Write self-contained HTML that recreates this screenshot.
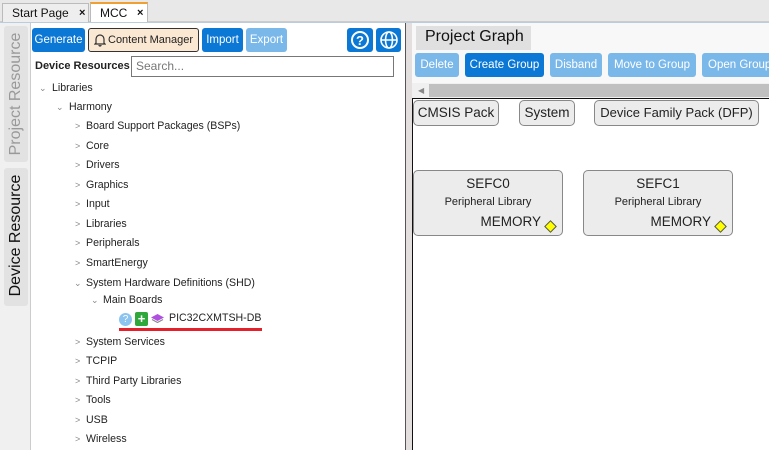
<!DOCTYPE html>
<html><head><style>
*{box-sizing:border-box;margin:0;padding:0}
body{width:769px;height:450px;overflow:hidden;background:#f0f0f0;font-family:"Liberation Sans",sans-serif;position:relative;font-size:12px;color:#111}
.a{position:absolute;white-space:nowrap}
.tab{position:absolute;top:3px;height:19px;border:1px solid #bbb;border-bottom:none;font-size:12px;padding:2px 0 0 9px}
.btn{position:absolute;height:24px;border-radius:3px;color:#fff;font-size:11.5px;text-align:center;line-height:24px;white-space:nowrap;overflow:hidden}
.tr{position:absolute;font-size:10.6px;color:#222;white-space:nowrap}
.ch{position:absolute;font-size:9px;color:#888}
.node{position:absolute;background:#ececec;border:1px solid #888;border-radius:5px;font-size:13.5px;color:#222;text-align:center;white-space:nowrap}
</style></head><body>
<div class="a" style="left:0;top:0;width:769px;height:22px;background:#e8e8e8;border-bottom:1px solid #ccc"></div>
<div class="tab" style="left:2px;width:87px;background:#eee">Start Page<span class="a" style="left:76px;top:3px;font-size:11px;font-weight:bold">×</span></div>
<div class="tab" style="left:90px;width:58px;top:2px;height:21px;background:#fff;border-top:2px solid #f0a030">MCC<span class="a" style="left:46px;top:3px;font-size:11px;font-weight:bold">×</span></div>
<div class="a" style="left:0;top:22px;width:769px;height:428px;background:#fff;border-top:1px solid #bcd"></div>
<div class="a" style="left:0;top:23px;width:31px;height:427px;background:#f0f0f0;border-right:1px solid #ccc"></div>
<div class="a" style="left:4px;top:26px;width:24px;height:136px;background:#e2e2e2;border-radius:3px"></div>
<div class="a" style="left:4px;top:168px;width:24px;height:138px;background:#e2e2e2;border-radius:3px"></div>
<div class="a" style="left:4px;top:162px;width:136px;height:24px;transform:rotate(-90deg);transform-origin:0 0;font-size:16px;color:#999;text-align:center;line-height:24px">Project Resource</div>
<div class="a" style="left:4px;top:303px;width:135px;height:24px;transform:rotate(-90deg);transform-origin:0 0;font-size:16px;color:#111;text-align:center;line-height:24px">Device Resource</div>
<div class="btn" style="left:32px;top:28px;width:53px;background:#0b78d6">Generate</div>
<div class="btn" style="left:88px;top:28px;width:111px;background:#fbe8d2;border:1px solid #333;color:#222;line-height:22px;text-align:left;padding-left:19px;font-size:11px"><svg class="a" style="left:5px;top:4px" width="12" height="14" viewBox="0 0 12 14"><path d="M2 10V6a4 4 0 0 1 8 0v4l1 1H1zM5 12a1 1 0 0 0 2 0" fill="none" stroke="#333" stroke-width="1.2"/></svg>Content Manager</div>
<div class="btn" style="left:202px;top:28px;width:41px;background:#0b78d6">Import</div>
<div class="btn" style="left:246px;top:28px;width:41px;background:#7ab8ea">Export</div>
<div class="btn" style="left:347px;top:28px;width:26px;background:#0b78d6"><svg width="20" height="20" style="margin-top:2px" viewBox="0 0 20 20"><circle cx="10" cy="10" r="8" fill="none" stroke="#fff" stroke-width="2"/><text x="10" y="15" font-size="13" font-weight="bold" fill="#fff" text-anchor="middle" font-family="Liberation Sans">?</text></svg></div>
<div class="btn" style="left:376px;top:28px;width:25px;background:#0b78d6"><svg width="20" height="20" style="margin-top:2px" viewBox="0 0 20 20" fill="none" stroke="#fff" stroke-width="1.6"><circle cx="10" cy="10" r="8"/><ellipse cx="10" cy="10" rx="3.5" ry="8"/><path d="M2 10h16"/></svg></div>
<div class="a" style="left:35px;top:60px;font-size:11px;font-weight:bold;color:#222">Device Resources</div>
<div class="a" style="left:131px;top:56px;width:263px;height:21px;border:1px solid #777;font-size:12px;color:#777;padding:2px 4px;background:#fff">Search...</div>
<div class="ch" style="left:39px;top:83px">&#8964;</div><div class="tr" style="left:52px;top:82px">Libraries</div>
<div class="ch" style="left:56px;top:102px">&#8964;</div><div class="tr" style="left:69px;top:101px">Harmony</div>
<div class="ch" style="left:75px;top:121px">&gt;</div><div class="tr" style="left:86px;top:120px">Board Support Packages (BSPs)</div>
<div class="ch" style="left:75px;top:141px">&gt;</div><div class="tr" style="left:86px;top:140px">Core</div>
<div class="ch" style="left:75px;top:160px">&gt;</div><div class="tr" style="left:86px;top:159px">Drivers</div>
<div class="ch" style="left:75px;top:180px">&gt;</div><div class="tr" style="left:86px;top:179px">Graphics</div>
<div class="ch" style="left:75px;top:199px">&gt;</div><div class="tr" style="left:86px;top:198px">Input</div>
<div class="ch" style="left:75px;top:219px">&gt;</div><div class="tr" style="left:86px;top:218px">Libraries</div>
<div class="ch" style="left:75px;top:238px">&gt;</div><div class="tr" style="left:86px;top:237px">Peripherals</div>
<div class="ch" style="left:75px;top:258px">&gt;</div><div class="tr" style="left:86px;top:257px">SmartEnergy</div>
<div class="ch" style="left:74px;top:278px">&#8964;</div><div class="tr" style="left:86px;top:277px">System Hardware Definitions (SHD)</div>
<div class="ch" style="left:91px;top:295px">&#8964;</div><div class="tr" style="left:103px;top:294px">Main Boards</div>
<div class="a" style="left:119px;top:313px;width:13px;height:13px;border-radius:50%;background:#8cc4f0;color:#fff;font-size:10px;text-align:center;line-height:13px">?</div>
<div class="a" style="left:135px;top:312px;width:13px;height:14px;border-radius:2px;background:#2ea83a;color:#fff;font-size:13px;font-weight:bold;text-align:center;line-height:14px">+</div>
<svg class="a" style="left:151px;top:314px" width="13" height="10" viewBox="0 0 13 10"><path d="M6.5 0L13 3.5 6.5 7 0 3.5z" fill="#b050e0"/><path d="M1 5.5l5.5 3 5.5-3" fill="none" stroke="#888" stroke-width="1.2"/></svg>
<div class="tr" style="left:169px;top:312px">PIC32CXMTSH-DB</div>
<div class="a" style="left:119px;top:328px;width:143px;height:3px;background:#e4202a"></div>
<div class="ch" style="left:75px;top:337px">&gt;</div><div class="tr" style="left:86px;top:336px">System Services</div>
<div class="ch" style="left:75px;top:356px">&gt;</div><div class="tr" style="left:86px;top:355px">TCPIP</div>
<div class="ch" style="left:75px;top:376px">&gt;</div><div class="tr" style="left:86px;top:375px">Third Party Libraries</div>
<div class="ch" style="left:75px;top:395px">&gt;</div><div class="tr" style="left:86px;top:394px">Tools</div>
<div class="ch" style="left:75px;top:415px">&gt;</div><div class="tr" style="left:86px;top:414px">USB</div>
<div class="ch" style="left:75px;top:434px">&gt;</div><div class="tr" style="left:86px;top:433px">Wireless</div>
<div class="a" style="left:405px;top:23px;width:7px;height:427px;background:#e3dfdf;border-left:1px solid #555"></div>
<div class="a" style="left:412px;top:23px;width:357px;height:76px;background:#f8f8f8"></div>
<div class="a" style="left:416px;top:26px;width:115px;height:24px;background:#e0e0e0;font-size:16px;padding:2px 0 0 9px;color:#111">Project Graph</div>
<div class="btn" style="left:415px;top:53px;width:44px;background:#7ab8ea">Delete</div>
<div class="btn" style="left:465px;top:53px;width:79px;background:#0b78d6">Create Group</div>
<div class="btn" style="left:550px;top:53px;width:52px;background:#7ab8ea">Disband</div>
<div class="btn" style="left:608px;top:53px;width:88px;background:#7ab8ea">Move to Group</div>
<div class="btn" style="left:702px;top:53px;width:70px;background:#7ab8ea;text-align:left;padding-left:6px">Open Group</div>
<div class="a" style="left:412px;top:83px;width:357px;height:15px;background:#f0f0f0"></div>
<div class="a" style="left:418px;top:86px;font-size:8px;color:#888">◀</div>
<div class="a" style="left:429px;top:84px;width:340px;height:13px;background:#c0c0c0"></div>
<div class="a" style="left:412px;top:98px;width:357px;height:352px;background:#fff;border-top:1px solid #111;border-left:1px solid #111"></div>
<div class="node" style="left:413px;top:100px;width:86px;height:26px;line-height:24px">CMSIS Pack</div>
<div class="node" style="left:519px;top:100px;width:56px;height:26px;line-height:24px">System</div>
<div class="node" style="left:594px;top:100px;width:165px;height:26px;line-height:24px;font-size:13px">Device Family Pack (DFP)</div>
<div class="node" style="left:413px;top:170px;width:150px;height:66px"><div style="margin-top:5px">SEFC0</div><div style="font-size:11px;margin-top:5px">Peripheral Library</div><div style="text-align:right;padding-right:21px;margin-top:6px">MEMORY</div><div class="a" style="right:7px;bottom:4px;width:9px;height:9px;background:#ff0;border:1px solid #555;transform:rotate(45deg)"></div></div>
<div class="node" style="left:583px;top:170px;width:150px;height:66px"><div style="margin-top:5px">SEFC1</div><div style="font-size:11px;margin-top:5px">Peripheral Library</div><div style="text-align:right;padding-right:21px;margin-top:6px">MEMORY</div><div class="a" style="right:7px;bottom:4px;width:9px;height:9px;background:#ff0;border:1px solid #555;transform:rotate(45deg)"></div></div>
</body></html>
